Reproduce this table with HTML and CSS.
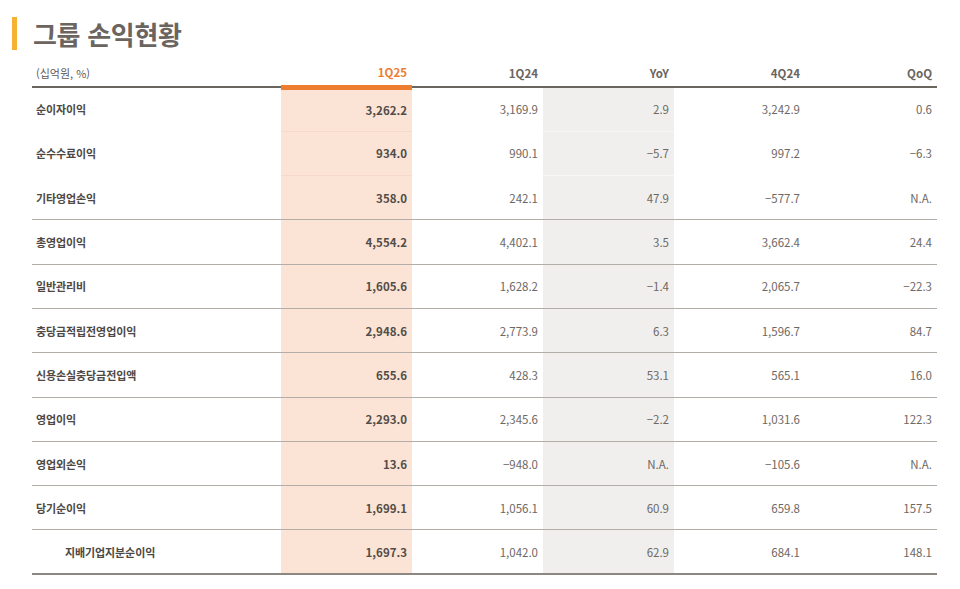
FILE: index.html
```html
<!DOCTYPE html>
<html lang="ko">
<head>
<meta charset="utf-8">
<title>그룹 손익현황</title>
<link rel="stylesheet" href="styles.css">
</head>
<body>
<div class="page">
  <div class="title-row">
    <span class="title-bar"></span>
    <h1 class="title">그룹 손익현황</h1>
  </div>
  <table class="pl">
    <colgroup>
      <col class="c-label"><col class="c-num"><col class="c-num"><col class="c-num"><col class="c-num"><col class="c-last">
    </colgroup>
    <thead>
      <tr>
        <th class="unit">(십억원, %)</th>
        <th class="hl">1Q25</th>
        <th>1Q24</th>
        <th>YoY</th>
        <th>4Q24</th>
        <th>QoQ</th>
      </tr>
    </thead>
    <tbody>
      <tr class="soft">
        <td class="lbl">순이자이익</td><td class="hl">3,262.2</td><td>3,169.9</td><td class="gr">2.9</td><td>3,242.9</td><td>0.6</td>
      </tr>
      <tr class="soft">
        <td class="lbl">순수수료이익</td><td class="hl">934.0</td><td>990.1</td><td class="gr">−5.7</td><td>997.2</td><td>−6.3</td>
      </tr>
      <tr>
        <td class="lbl">기타영업손익</td><td class="hl">358.0</td><td>242.1</td><td class="gr">47.9</td><td>−577.7</td><td>N.A.</td>
      </tr>
      <tr>
        <td class="lbl">총영업이익</td><td class="hl">4,554.2</td><td>4,402.1</td><td class="gr">3.5</td><td>3,662.4</td><td>24.4</td>
      </tr>
      <tr>
        <td class="lbl">일반관리비</td><td class="hl">1,605.6</td><td>1,628.2</td><td class="gr">−1.4</td><td>2,065.7</td><td>−22.3</td>
      </tr>
      <tr>
        <td class="lbl">충당금적립전영업이익</td><td class="hl">2,948.6</td><td>2,773.9</td><td class="gr">6.3</td><td>1,596.7</td><td>84.7</td>
      </tr>
      <tr>
        <td class="lbl">신용손실충당금전입액</td><td class="hl">655.6</td><td>428.3</td><td class="gr">53.1</td><td>565.1</td><td>16.0</td>
      </tr>
      <tr>
        <td class="lbl">영업이익</td><td class="hl">2,293.0</td><td>2,345.6</td><td class="gr">−2.2</td><td>1,031.6</td><td>122.3</td>
      </tr>
      <tr>
        <td class="lbl">영업외손익</td><td class="hl">13.6</td><td>−948.0</td><td class="gr">N.A.</td><td>−105.6</td><td>N.A.</td>
      </tr>
      <tr>
        <td class="lbl">당기순이익</td><td class="hl">1,699.1</td><td>1,056.1</td><td class="gr">60.9</td><td>659.8</td><td>157.5</td>
      </tr>
      <tr class="last">
        <td class="lbl sub">지배기업지분순이익</td><td class="hl">1,697.3</td><td>1,042.0</td><td class="gr">62.9</td><td>684.1</td><td>148.1</td>
      </tr>
    </tbody>
  </table>
</div>
</body>
</html>
```

FILE: styles.css
```css
* { box-sizing: border-box; }
html, body { margin: 0; padding: 0; background: #ffffff; }
body {
  font-family: "Noto Sans CJK KR", "Noto Sans", sans-serif;
  color: #6e6864;
}
.page {
  padding: 17px 0 0 12px;
}
.title-row {
  display: flex;
  align-items: center;
  gap: 16px;
  height: 33px;
}
.title-bar {
  width: 5px;
  height: 33px;
  background: #f5b233;
}
.title {
  margin: 0;
  font-size: 26px;
  font-weight: 700;
  letter-spacing: -0.3px;
  line-height: 33px;
  color: #6c655f;
}
.pl {
  margin: 10px 0 0 20px;
  width: 905px;
  border-collapse: collapse;
  table-layout: fixed;
}
.c-label { width: 249px; }
.c-num { width: 131px; }
.c-last { width: 132px; }
.pl th {
  height: 27px;
  padding: 0 5px 0 0;
  text-align: right;
  font-size: 11.5px;
  font-weight: 700;
  color: #6b6560;
  border-bottom: 2px solid #6b6560;
  vertical-align: middle;
}
.pl th.unit {
  text-align: left;
  padding-left: 4px;
  font-weight: 400;
  font-size: 11px;
  letter-spacing: 0;
  color: #5f5955;
}
.pl th.hl {
  color: #ed7d31;
  border-bottom: 5px solid #ed7d31;
}
.pl td {
  height: 44.3px;
  padding: 0 5px 0 0;
  text-align: right;
  font-size: 11.5px;
  color: #6e6864;
  border-bottom: 1px solid #b3ada8;
  vertical-align: middle;
}
.pl tr.soft td { border-bottom: 1px solid #ffffff; }
.pl tr.soft td.hl { border-bottom-color: #f7d9c9; }
.pl tr.soft td.gr { border-bottom-color: #f8f7f6; }
.pl tr.last td { border-bottom: 2px solid #8d8782; }
.pl td.lbl {
  text-align: left;
  padding-left: 4px;
  font-size: 11px;
  font-weight: 700;
  letter-spacing: -0.1px;
  color: #4d4844;
}
.pl td.lbl.sub { padding-left: 33px; }
.pl td.hl {
  background: #fbe4d6;
  font-weight: 700;
  color: #524c48;
}
.pl td.gr { background: #f0efee; }
```
